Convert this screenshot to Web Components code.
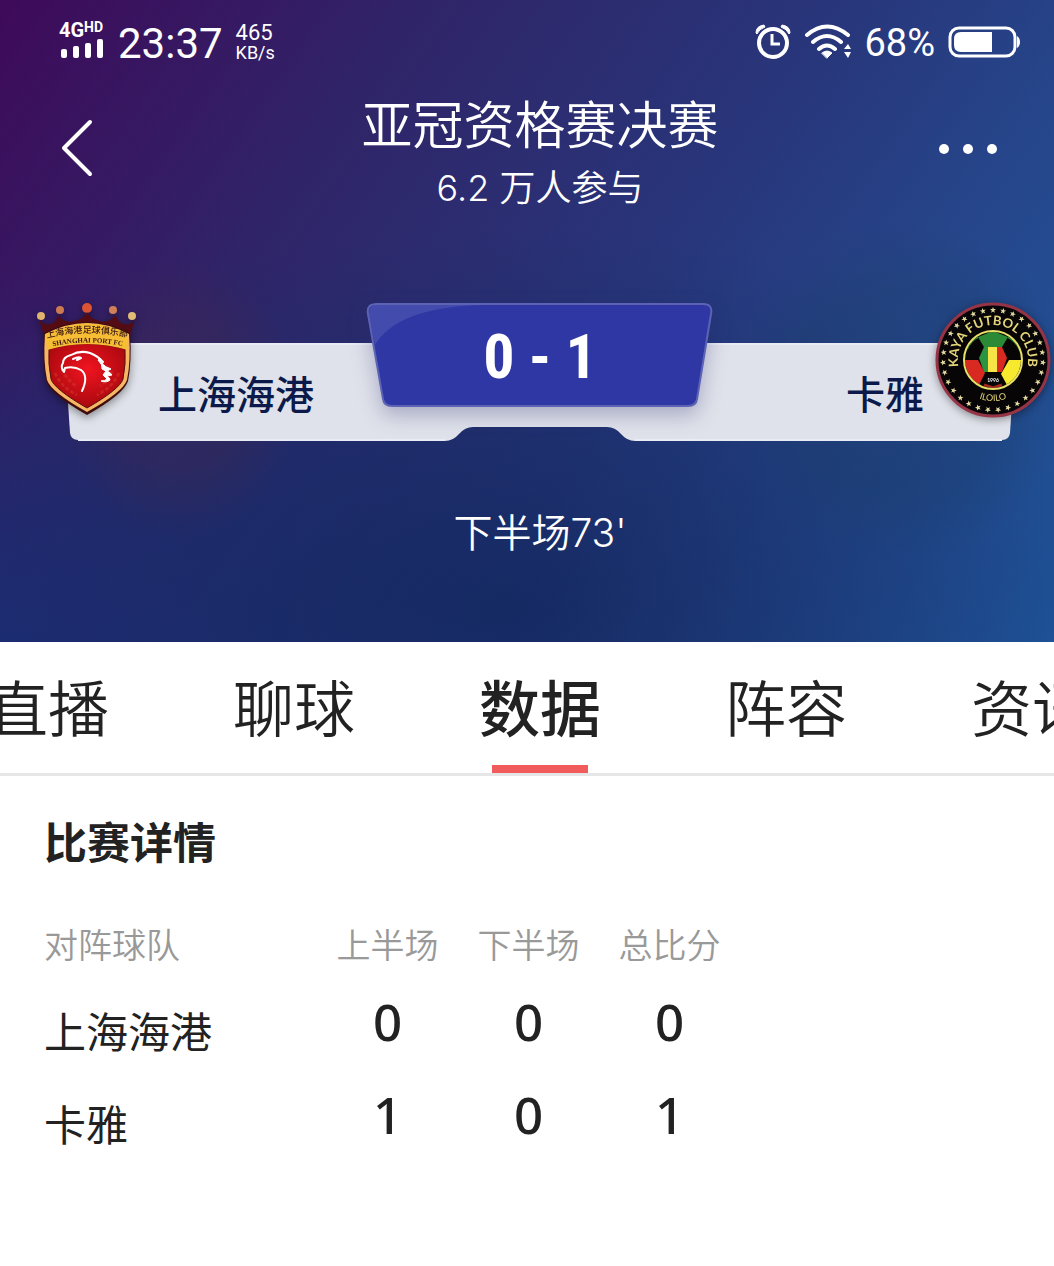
<!DOCTYPE html>
<html lang="zh-CN">
<head>
<meta charset="utf-8">
<meta name="viewport" content="width=device-width, initial-scale=1">
<title>比赛详情</title>
<style>
body {
  margin: 0;
  background: #fff;
  color: #222;
  font-family: "Noto Sans CJK SC", sans-serif;
}
</style>
</head>
<body>
<match-page></match-page>

<script>
function define(name, html) {
  const template = document.createElement('template');
  template.innerHTML = html;
  window.customElements.define(name, class extends HTMLElement {
    constructor() {
      super();
      this.attachShadow({ mode: 'open' });
      this.shadowRoot.appendChild(template.content.cloneNode(true));
    }
  });
}

// ring of small five-pointed stars for the round crest
function starRing(count, cx, cy, radius) {
  let stars = '';
  for (let i = 0; i < count; i++) {
    const angle = (360 / count) * i;
    stars += `<path transform="rotate(${angle} ${cx} ${cy}) translate(${cx} ${cy - radius})" d="M0-3L.8-1H3L1.2.5 1.9 2.7 0 1.4-1.9 2.7-1.2.5-3-1H-.8z"/>`;
  }
  return stars;
}

define('status-bar', `
<style>
:host {
  display: flex;
  align-items: center;
  justify-content: space-between;
  height: 84px;
  padding: 0 34px 0 59px;
  color: #fff;
  font-family: Roboto, sans-serif;
}
.side { display: flex; align-items: center; gap: 13px; }
.network { display: flex; flex-direction: column; padding-bottom: 4px; }
.label { display: flex; font-weight: 700; font-size: 20px; line-height: 18px; }
.label sup { font-size: 14px; line-height: 12px; vertical-align: top; }
.time { font-size: 42px; line-height: 48px; padding-top: 4px; }
.speed { display: flex; flex-direction: column; font-size: 22px; line-height: 22px; }
.speed small { font-size: 18px; line-height: 18px; }
.battery { font-size: 38px; line-height: 44px; padding-top: 2px; }
svg { display: block; }
</style>
<div class="side">
  <div class="network">
    <span class="label">4G<sup>HD</sup></span>
    <svg width="46" height="20" viewBox="0 0 46 20" fill="#fff">
      <rect x="2" y="10" width="6" height="9" rx="2"/>
      <rect x="14" y="7" width="6" height="12" rx="2"/>
      <rect x="26" y="4" width="6" height="15" rx="2"/>
      <rect x="38" y="0" width="6" height="19" rx="2"/>
    </svg>
  </div>
  <span class="time">23:37</span>
  <div class="speed">465<small>KB/s</small></div>
</div>
<div class="side">
  <svg width="36" height="36" viewBox="0 0 36 36" fill="none" stroke="#fff">
    <circle cx="18" cy="19" r="14" stroke-width="4"/>
    <path d="M17 10v10h8" stroke-width="3"/>
    <path d="M1 9Q1 2 9 1l1 2Q4 5 2 10zM35 9Q35 2 27 1l-1 2q6 2 8 7z" fill="#fff" stroke-width="1"/>
  </svg>
  <svg width="47" height="36" viewBox="0 0 47 36" fill="none" stroke="#fff" stroke-width="4" stroke-linecap="round">
    <path d="M3 11q20-17 41 0M9 18q14-12 28 0M15 25q8-7 16 0"/>
    <path d="M18 29q5-4 10 0l-5 5z" fill="#fff" stroke-width="1"/>
    <path d="M40 25l4-5 3 5zM40 28l4 6 3-6z" fill="#fff" stroke="none"/>
  </svg>
  <span class="battery">68%</span>
  <svg width="72" height="32" viewBox="0 0 72 32">
    <rect x="2" y="2" width="65" height="28" rx="9" fill="none" stroke="#fff" stroke-width="3"/>
    <path d="M13 6h31v20H13q-7 0-7-7v-6q0-7 7-7z" fill="#fff"/>
    <path d="M69 10q3 2 3 6t-3 6z" fill="#fff"/>
  </svg>
</div>
`);

define('match-header', `
<style>
:host {
  display: grid;
  grid-template-columns: 104px 1fr 104px;
  align-items: center;
  padding: 0 34px 0 60px;
  color: #fff;
  font-family: Inter, "Noto Sans CJK SC", sans-serif;
  font-weight: 350;
  text-align: center;
}
h1 { margin: 0; font-size: 51px; line-height: 84px; font-weight: inherit; }
p { margin: 0; font-size: 36px; line-height: 40px; }
button {
  display: flex;
  padding: 4px 0 0;
  border: 0;
  background: none;
}
.more { justify-content: center; }
</style>
<button type="button" aria-label="返回">
  <svg width="36" height="60" viewBox="0 0 36 60" fill="none" stroke="#fff" stroke-width="4" stroke-linecap="round" stroke-linejoin="round"><path d="M30 4L4 30l26 26"/></svg>
</button>
<div>
  <h1><slot name="title"></slot></h1>
  <p><slot name="count"></slot></p>
</div>
<button class="more" type="button" aria-label="更多">
  <svg width="60" height="12" viewBox="0 0 60 12" fill="#fff"><circle cx="6" cy="7" r="5"/><circle cx="30" cy="7" r="5"/><circle cx="54" cy="7" r="5"/></svg>
</button>
`);

define('shanghai-crest', `
<style>
:host { display: block; width: 104px; height: 120px; }
svg { display: block; overflow: visible; filter: drop-shadow(0 3px 4px rgba(0, 0, 0, .4)); }
text { font-family: "Noto Sans CJK SC", sans-serif; font-weight: 500; fill: #3a1610; }
.en { font-family: "Liberation Serif", serif; font-weight: 700; }
</style>
<svg width="104" height="120" viewBox="0 0 104 120">
  <defs>
    <radialGradient id="field" cx=".5" cy=".4" r=".6"><stop offset="0" stop-color="#f01420"/><stop offset="1" stop-color="#a8080e"/></radialGradient>
    <path id="arc-cn" d="M11 39Q51 29 95 39"/>
    <path id="arc-en" d="M14 48Q51 39 92 48"/>
  </defs>
  <circle cx="5" cy="17" r="4" fill="#e0b46c"/>
  <circle cx="24" cy="11" r="4" fill="#cc7a52"/>
  <circle cx="51" cy="9" r="5" fill="#dc5433"/>
  <circle cx="77" cy="11" r="4" fill="#cf8058"/>
  <circle cx="96" cy="17" r="4" fill="#e0bd75"/>
  <path d="M3 20Q8 27 14 25Q21 23 22 16Q29 25 38 22Q48 20 51 13Q54 20 64 22Q72 25 80 16Q81 23 88 25Q95 27 99 20L93 40H9z" fill="#540c14"/>
  <path d="M8 34Q51 12 94 34Q96 62 92 82Q88 95 51 116Q14 95 10 82Q6 62 8 34z" fill="#3f0b0c"/>
  <path d="M9 35Q51 13 93 35Q95 62 91 81Q87 93 51 113Q15 93 11 81Q7 62 9 35z" fill="#f6b765"/>
  <path d="M13 50Q51 39 89 50Q90 65 87 80Q84 90 51 109Q18 90 15 80Q12 65 13 50z" fill="url(#field)" stroke="#57100e"/>
  <path d="M10 35Q51 14 92 35V51Q51 39 11 51z" fill="#f6bd35"/>
  <text font-size="9"><textPath href="#arc-cn">上海海港足球俱乐部</textPath></text>
  <text class="en" font-size="7"><textPath href="#arc-en" startOffset="3">SHANGHAI PORT FC</textPath></text>
  <path d="M19 74q6 14 22 22M26 70q4 10 14 17M83 74q-6 14-22 22M76 72q-4 9-12 15" fill="none" stroke="#d23a2c" stroke-width="3" stroke-dasharray="4 2" opacity=".5"/>
  <path d="M46 92Q53 77 45 71Q38 67 29 69L28 73Q24 68 27 64Q27 58 35 56Q44 51 54 54Q62 57 67 63M37 60q6-3 8-1l-4 2" fill="none" stroke="#fff" stroke-width="2" stroke-linecap="round" stroke-linejoin="round"/>
  <path d="M64 59q2 8 9 10l2 1-4 2q3 1 5 4l-5 1q3 2 3 4-3 3-9 1 4 0 6-2l-4-4 3-4-4-2q1-4-4-9z" fill="#fff" stroke="#fff"/>
</svg>
`);

define('kaya-crest', `
<style>
:host { display: block; width: 118px; height: 118px; }
svg { display: block; overflow: visible; filter: drop-shadow(0 2px 4px rgba(0, 0, 0, .4)); }
text { font-family: Lato, sans-serif; font-weight: 700; text-anchor: middle; }
.place { font-weight: 400; }
</style>
<svg width="118" height="118" viewBox="0 0 118 118">
  <defs>
    <path id="top" d="M29 77A35 35 0 1 1 89 77"/>
    <path id="bottom" d="M18 59A41 41 0 0 0 100 59"/>
    <clipPath id="ball"><circle cx="59" cy="59" r="28"/></clipPath>
  </defs>
  <circle cx="59" cy="59" r="56" fill="#080507" stroke="#963447" stroke-width="3"/>
  <g fill="#e3dba0">${starRing(31, 59, 59, 50)}</g>
  <text font-size="13" fill="#e4d578"><textPath href="#top" startOffset="50%">KAYA FUTBOL CLUB</textPath></text>
  <text class="place" font-size="9" fill="#e4d578"><textPath href="#bottom" startOffset="50%">ILOILO</textPath></text>
  <g clip-path="url(#ball)">
    <rect x="30" y="30" width="58" height="58" fill="#080507"/>
    <path d="M44 36l15-6 15 6-6 10H50z" fill="#2c8a36"/>
    <path d="M30 59h14l7 13-6 12-12-5z" fill="#d92a22"/>
    <path d="M75 59h14v14l-8 9-8 2-6-11z" fill="#f7ea2e"/>
    <path d="M54 46h-4l-5 11 5 14h4z" fill="#2c9340"/>
    <path d="M54 46h9v25h-9z" fill="#f6e544"/>
    <path d="M63 46h5l5 11-5 14h-5z" fill="#d92a22"/>
    <path d="M33 48q4-9 11-12M74 36q8 4 12 13" stroke="#2c8a36" stroke-width="2" fill="none"/>
    <path d="M50 84l9 3 9-3" stroke="#a52620" stroke-width="3" fill="none"/>
  </g>
  <circle cx="59" cy="59" r="29" fill="none" stroke="#e8e066" stroke-width="2"/>
  <text x="59" y="81" font-size="5" fill="#fff">1996</text>
</svg>
`);

define('score-board', `
<style>
:host {
  display: grid;
  grid-template-columns: 1fr 348px 1fr;
  margin-left: 26px;
  color: #0c1a4b;
}
/* the tray spans all three columns, teams and score lie over it */
.tray {
  grid-area: 1 / 1 / 2 / 4;
  display: grid;
  grid-template-columns: 1fr 190px 1fr;
  margin: 44px 38px 0;
  height: 98px;
}
.tray svg { display: block; width: 100%; height: 98px; }
.tray svg:last-child { transform: scaleX(-1); }
.team { display: flex; grid-row: 1; z-index: 1; }
.home { grid-column: 1; gap: 18px; padding-left: 10px; }
.away { grid-column: 3; gap: 10px; justify-content: flex-end; padding-right: 2px; }
.away kaya-crest { margin-top: 2px; }
.name { padding-top: 64px; font-size: 39px; line-height: 58px; font-weight: 500; white-space: nowrap; }
.score { display: grid; grid-area: 1 / 2; z-index: 1; align-content: start; padding-top: 4px; }
.score svg, .score strong { grid-area: 1 / 1; }
.score svg { overflow: visible; filter: drop-shadow(0 8px 10px rgba(40, 40, 110, .3)); }
.score strong {
  z-index: 1;
  color: #fff;
  font: 700 62px/108px "Liberation Sans Narrow", "Roboto Condensed", Roboto, sans-serif;
  text-align: center;
}
</style>
<div class="tray">
  <svg><path d="M0 0H2000V97H14Q7 97 6 90z" fill="#dfe2ea"/><path d="M0 1H2000M14 97H2000" stroke="#e9ecf5" stroke-width="2"/></svg>
  <svg><path d="M0 0H190V98Q182 98 176 91T162 84H28Q20 84 14 91T0 98z" fill="#dfe2ea"/></svg>
  <svg><path d="M0 0H2000V97H14Q7 97 6 90z" fill="#dfe2ea"/><path d="M0 1H2000M14 97H2000" stroke="#e9ecf5" stroke-width="2"/></svg>
</div>
<div class="team home">
  <shanghai-crest></shanghai-crest>
  <span class="name"><slot name="home"></slot></span>
</div>
<div class="score">
  <svg width="348" height="106" viewBox="0 0 348 106">
    <path d="M11 1H337Q347 1 345 11L331 96Q330 103 322 103H26Q18 103 17 96L2 11Q0 1 11 1z" fill="#2e37a3" stroke="#5c63b5" stroke-width="2"/>
    <path d="M11 2H110Q30 6 9 42L3 11Q2 2 11 2z" fill="#fff" opacity=".1"/>
  </svg>
  <strong><slot name="score"></slot></strong>
</div>
<div class="team away">
  <span class="name"><slot name="away"></slot></span>
  <kaya-crest></kaya-crest>
</div>
`);

define('match-hero', `
<style>
:host {
  display: block;
  height: 642px;
  overflow: hidden;
  background:
    radial-gradient(ellipse 120px 140px at 180px 400px, rgba(80, 40, 65, .25) 50%, transparent),
    radial-gradient(circle 170px at 900px 390px, rgba(25, 60, 100, .3) 60%, transparent),
    radial-gradient(ellipse 60% 60% at 48% 95%, rgba(17, 38, 92, .8), transparent),
    radial-gradient(ellipse 60% 55% at 0 100%, rgba(28, 46, 118, .9), transparent),
    linear-gradient(125deg, #3e0a5a, #302468 28%, #28377c 58%, #26468b 75%, #1f569c);
}
.board { padding-top: 91px; }
.clock {
  margin: 62px 0 0 26px;
  color: #fff;
  font: 350 39px/60px Inter, "Noto Sans CJK SC", sans-serif;
  text-align: center;
}
</style>
<status-bar></status-bar>
<match-header>
  <span slot="title">亚冠资格赛决赛</span>
  <span slot="count">6.2 万人参与</span>
</match-header>
<div class="board">
  <score-board>
    <span slot="home">上海海港</span>
    <span slot="score">0 - 1</span>
    <span slot="away">卡雅</span>
  </score-board>
</div>
<div class="clock">下半场73'</div>
`);

define('match-tabs', `
<style>
:host { display: block; overflow: hidden; border-bottom: 3px solid #e6e6e6; }
nav { display: flex; justify-content: center; gap: 124px; margin-left: 26px; }
a {
  flex: none;
  padding-bottom: 4px;
  color: #222;
  font-size: 61px;
  line-height: 127px;
  font-weight: 350;
  text-decoration: none;
}
a[aria-current] { font-weight: 500; background: linear-gradient(#f25b5b, #f25b5b) center bottom / 96px 8px no-repeat; }
</style>
<nav>
  <a href="#live">直播</a>
  <a href="#chat">聊球</a>
  <a href="#data" aria-current="page">数据</a>
  <a href="#lineup">阵容</a>
  <a href="#news">资讯</a>
</nav>
`);

define('match-details', `
<style>
:host { display: block; padding: 36px 44px; }
h2 { margin: 0; font-size: 43px; line-height: 56px; font-weight: 700; }
table { margin-top: 40px; border-collapse: collapse; table-layout: fixed; width: 696px; max-width: 100%; }
th, td { padding: 0; text-align: center; width: 141px; }
thead th { height: 74px; color: #999; font-size: 34px; line-height: 72px; font-weight: 350; vertical-align: top; }
tbody th { padding-top: 2px; font-size: 42px; line-height: 91px; font-weight: 400; }
th:first-child { width: auto; text-align: left; }
td { font: 500 51px/78px "Noto Sans", sans-serif; vertical-align: top; }
</style>
<h2>比赛详情</h2>
<table>
  <thead>
    <tr><th scope="col">对阵球队</th><th scope="col">上半场</th><th scope="col">下半场</th><th scope="col">总比分</th></tr>
  </thead>
  <tbody>
    <tr><th scope="row">上海海港</th><td>0</td><td>0</td><td>0</td></tr>
    <tr><th scope="row">卡雅</th><td>1</td><td>0</td><td>1</td></tr>
  </tbody>
</table>
`);

define('match-page', `
<style>
:host { display: block; }
</style>
<match-hero></match-hero>
<match-tabs></match-tabs>
<match-details></match-details>
`);
</script>
</body>
</html>
